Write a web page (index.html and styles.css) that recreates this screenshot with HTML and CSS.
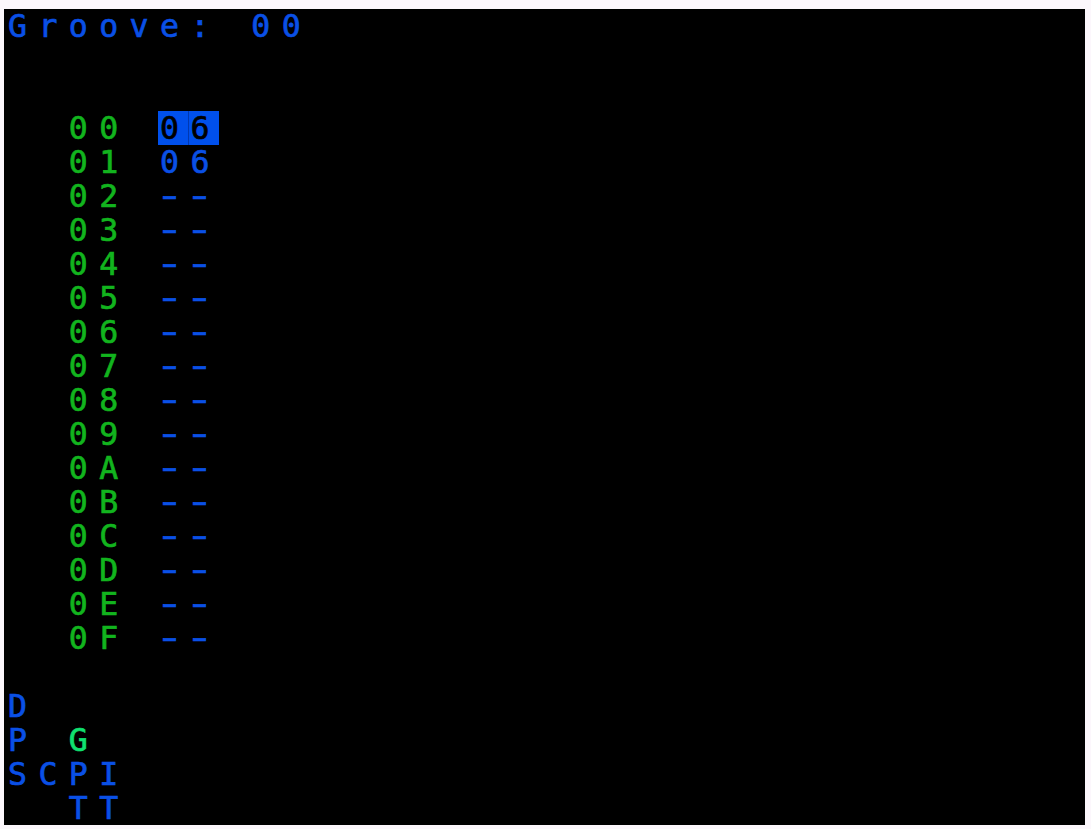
FILE: index.html
```html
<!DOCTYPE html>
<html lang="en">
<head>
<meta charset="utf-8">
<title>Groove</title>
<link rel="stylesheet" href="styles.css">
</head>
<body>
<main class="screen">
  <div class="row blue">Groove: 00</div>
  <div class="row"> </div>
  <div class="row"> </div>
  <div class="row">  <span class="green">00</span> <span class="hl">06</span></div>
  <div class="row">  <span class="green">01</span> <span class="blue">06</span></div>
  <div class="row">  <span class="green">02</span> <span class="blue"><span class="dash">-</span><span class="dash">-</span></span></div>
  <div class="row">  <span class="green">03</span> <span class="blue"><span class="dash">-</span><span class="dash">-</span></span></div>
  <div class="row">  <span class="green">04</span> <span class="blue"><span class="dash">-</span><span class="dash">-</span></span></div>
  <div class="row">  <span class="green">05</span> <span class="blue"><span class="dash">-</span><span class="dash">-</span></span></div>
  <div class="row">  <span class="green">06</span> <span class="blue"><span class="dash">-</span><span class="dash">-</span></span></div>
  <div class="row">  <span class="green">07</span> <span class="blue"><span class="dash">-</span><span class="dash">-</span></span></div>
  <div class="row">  <span class="green">08</span> <span class="blue"><span class="dash">-</span><span class="dash">-</span></span></div>
  <div class="row">  <span class="green">09</span> <span class="blue"><span class="dash">-</span><span class="dash">-</span></span></div>
  <div class="row">  <span class="green">0A</span> <span class="blue"><span class="dash">-</span><span class="dash">-</span></span></div>
  <div class="row">  <span class="green">0B</span> <span class="blue"><span class="dash">-</span><span class="dash">-</span></span></div>
  <div class="row">  <span class="green">0C</span> <span class="blue"><span class="dash">-</span><span class="dash">-</span></span></div>
  <div class="row">  <span class="green">0D</span> <span class="blue"><span class="dash">-</span><span class="dash">-</span></span></div>
  <div class="row">  <span class="green">0E</span> <span class="blue"><span class="dash">-</span><span class="dash">-</span></span></div>
  <div class="row">  <span class="green">0F</span> <span class="blue"><span class="dash">-</span><span class="dash">-</span></span></div>
  <div class="row"> </div>
  <div class="row blue">D</div>
  <div class="row"><span class="blue">P</span> <span class="bright">G</span></div>
  <div class="row blue">SCPI</div>
  <div class="row blue">  TT</div>
</main>
</body>
</html>
```

FILE: styles.css
```css
html, body {
  margin: 0;
  padding: 0;
}
body {
  background: #fcf7fc;
  padding: 9px 0 0 4px;
}
.screen {
  width: 1081px;
  height: 816px;
  background: #000;
  overflow: hidden;
  font-family: "DejaVu Sans Mono", monospace;
  font-weight: normal;
  font-size: 31.5px;
  line-height: 34px;
  -webkit-text-stroke: 0.7px currentColor;
}
.row {
  height: 34px;
  white-space: pre;
  letter-spacing: 11.44px;
  padding-left: 4px;
}
.blue { color: #0a50e6; }
.green { color: #12b41e; }
.bright { color: #10e070; }
.dash {
  display: inline-block;
  letter-spacing: 0;
  width: 18.96px;
  margin-right: 11.44px;
  text-align: center;
  transform: scaleX(1.5);
  transform-origin: 50% 50%;
}
.hl {
  display: inline-block;
  box-sizing: border-box;
  width: 61px;
  height: 34px;
  margin-left: -2px;
  padding-left: 2px;
  vertical-align: top;
  color: #000;
  background: linear-gradient(to right, #0050ec 0, #0050ec 30px, #0038b0 30px, #0038b0 31px, #0050ec 31px);
}
```
